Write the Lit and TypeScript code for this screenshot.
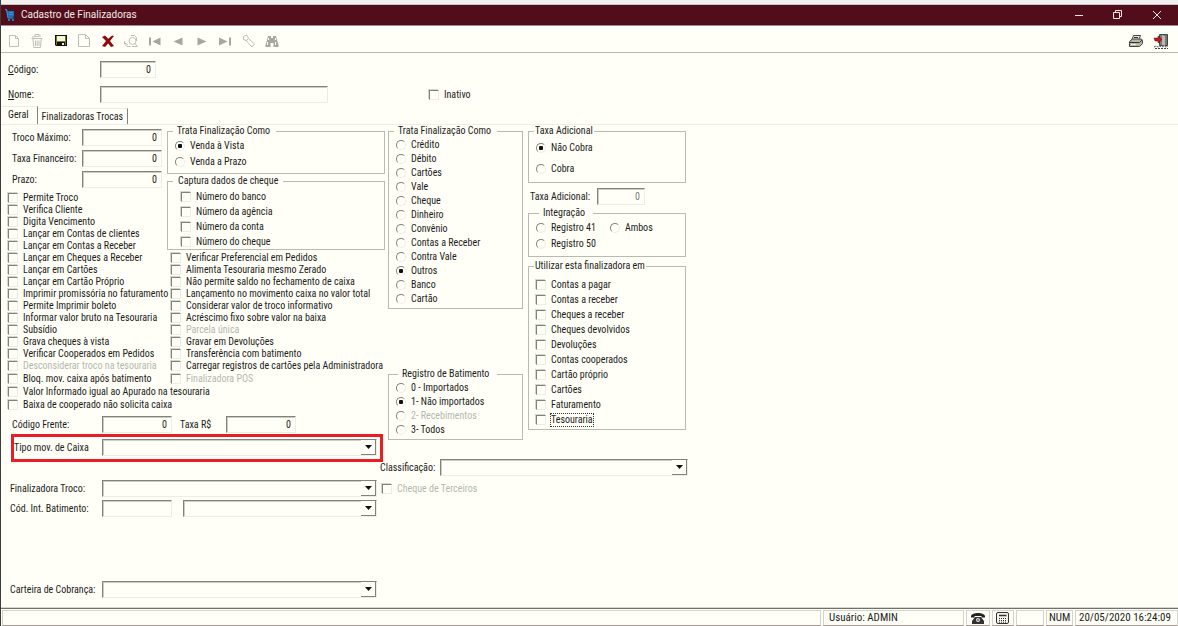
import { LitElement, html, css, svg, nothing } from "lit";
import { customElement } from "lit/decorators.js";
import { classMap } from "lit/directives/class-map.js";

type Option = { text: string; off?: boolean; on?: boolean; focus?: boolean };

const opts = (...texts: string[]): Option[] => texts.map((text) => ({ text }));

const FLAGS_A: Option[] = [
  ...opts(
    "Permite Troco", "Verifica Cliente", "Digita Vencimento", "Lançar em Contas de clientes",
    "Lançar em Contas a Receber", "Lançar em Cheques a Receber", "Lançar em Cartões",
    "Lançar em Cartão Próprio", "Imprimir promissória no faturamento", "Permite Imprimir boleto",
    "Informar valor bruto na Tesouraria", "Subsídio", "Grava cheques à vista",
    "Verificar Cooperados em Pedidos"
  ),
  { text: "Desconsiderar troco na tesouraria", off: true },
];
const FLAGS_A_END = opts(
  "Bloq. mov. caixa após batimento",
  "Valor Informado igual ao Apurado na tesouraria",
  "Baixa de cooperado não solicita caixa"
);
const FLAGS_B: Option[] = [
  ...opts(
    "Verificar Preferencial em Pedidos", "Alimenta Tesouraria mesmo Zerado",
    "Não permite saldo no fechamento de caixa", "Lançamento no movimento caixa no valor total",
    "Considerar valor de troco informativo", "Acréscimo fixo sobre valor na baixa"
  ),
  { text: "Parcela única", off: true },
  ...opts("Gravar em Devoluções", "Transferência com batimento", "Carregar registros de cartões pela Administradora"),
];
const FLAGS_B_END: Option[] = [{ text: "Finalizadora POS", off: true }];
const CHEQUE = opts("Número do banco", "Número da agência", "Número da conta", "Número do cheque");
const TIPO: Option[] = [
  ...opts("Crédito", "Débito", "Cartões", "Vale", "Cheque", "Dinheiro", "Convênio", "Contas a Receber", "Contra Vale"),
  { text: "Outros", on: true },
  ...opts("Banco", "Cartão"),
];
const BATIMENTO: Option[] = [
  { text: "0 - Importados" },
  { text: "1- Não importados", on: true },
  { text: "2- Recebimentos", off: true },
  { text: "3- Todos" },
];
const UTILIZAR: Option[] = [
  ...opts(
    "Contas a pagar", "Contas a receber", "Cheques a receber", "Cheques devolvidos", "Devoluções",
    "Contas cooperados", "Cartão próprio", "Cartões", "Faturamento"
  ),
  { text: "Tesouraria", focus: true },
];

const GREY = "#a4a8a0";
const PALE = "#bdc0b8";
const TOOLS = [
  { name: "Novo", art: svg`<path d="M3.500 2.500h6l3 3v8h-9zM9.500 2.500v3h3" fill="none" stroke=${PALE}/>` },
  { name: "Excluir", art: svg`<path d="M2.500 5.500h11M3 4l9-1M6 3V1.500h4V3M4 6l.8 8.500h6.600L12.200 6M6.500 7.500v5.500M8.200 7.500v5.500M10 7.500v5.500" fill="none" stroke=${PALE}/>` },
  { name: "Salvar", art: svg`<path d="M2 2h12v11H3l-1-1z" fill="#111"/><path d="M4 3h8v5H4z" fill="#f4f4e8"/><path d="M3 3h1v5h8V3h1v9h-1V9H4v3H3z" fill="#77780e"/><path d="M5 10h6v3H5z" fill="#111"/><path d="M9 10h2v2H9z" fill="#eee"/>` },
  { name: "Copiar", art: svg`<path d="M2.500 1.500h7l4 4v8h-11zM9.500 1.500v4h4" fill="none" stroke=${PALE}/>` },
  { name: "Cancelar", art: svg`<path d="M2 4l3-1.500 3.300 3.300L12 2.500l2 .5-4 5 4 5-3 1-2.800-3.500L5 14l-3-1 4-5z" fill="#8b0d0d"/>` },
  { name: "Pesquisar", art: svg`<circle cx="9.500" cy="8" r="3.500" fill="none" stroke=${PALE}/><path d="M12 10.500l2.500 3H9M8 2.500h3.500l2 2V8M1.500 8v3L4 13.500h3.500M2 10l3 2" fill="none" stroke=${PALE}/>` },
  { name: "Primeiro", art: svg`<path d="M2 4.500h2v8H2zM13.500 4.500v8l-8-4z" fill=${GREY}/>` },
  { name: "Anterior", art: svg`<path d="M12.500 4.500v8l-9-4z" fill=${GREY}/>` },
  { name: "Próximo", art: svg`<path d="M3.500 4.500v8l9-4z" fill=${GREY}/>` },
  { name: "Último", art: svg`<path d="M12 4.500h2v8h-2zM2 4.500v8l8.500-4z" fill=${GREY}/>` },
  { name: "Limpar", art: svg`<path d="M2.500 3.500l3-1.500 2 3.500 6 5.500-2.500 3-6-6.500-2.500-1zM5 8l2.500-2.500" fill="none" stroke=${PALE}/>` },
  { name: "Localizar", art: svg`<path d="M4 3h3v2h2V3h3l1 4 1.500 5v2h-5v-4h-3v4h-5v-2L3 7z" fill=${GREY}/><path d="M4.500 5v2M11.500 5v2M3.500 9v3M11.500 9v3" stroke="#fffff8"/>` },
];

@customElement("app-root")
export class AppRoot extends LitElement {
  static styles = css`
    :host {
      --paper: #fffff8;
      --dark: #7f847b;
      --line: #b7bcb2;
      --faint: #eceee5;
      display: flex;
      flex-direction: column;
      box-sizing: border-box;
      min-height: 100vh;
      background: var(--paper);
      border-left: 1px solid #3c3c3c;
      color: #1c1d1a;
      font: 10px/12px "Roboto Condensed", Roboto, "Liberation Sans", sans-serif;
      white-space: nowrap;
    }
    * { box-sizing: border-box; }
    button, input, select { font: inherit; color: inherit; margin: 0; padding: 0; border-radius: 0; }
    button { border: 0; background: none; display: grid; place-items: center; }
    .edge { height: 5px; background: #f0f0f0; border-bottom: 1px solid #c6c6c6; }
    .title { display: flex; align-items: center; height: 21px; padding-right: 2px; background: #520d1b; color: #f3e9ea; border-bottom: 1px solid #a58a90; }
    .title svg { margin: 0 6px 0 3px; }
    h1 { flex: 1; margin: 0; font: 10px/20px Roboto, "Noto Sans", sans-serif; }
    .title button { width: 39px; height: 20px; }
    .title button svg { margin: 0; }
    .tools { display: flex; justify-content: space-between; height: 27px; align-items: center; border-bottom: 1px solid var(--line); padding: 3px 5px 0 1px; }
    .group { display: grid; grid-template-columns: repeat(12, 1fr); width: 282px; }
    .pair { display: flex; }
    .pair button { width: 25px; }
    .head { display: grid; gap: 8px; padding: 8px 7px 3px; }
    .row { display: flex; align-items: center; }
    .row > .cap, .row label { display: flex; align-items: center; }
    .cap { flex: none; }
    .head .cap { width: 92px; }
    .box {
      height: 17px; min-width: 0; padding: 0 4px 1px 2px; text-align: right; outline: 0;
      background: transparent; border: 1px solid var(--faint);
      border-top-color: var(--dark); border-left-color: var(--dark);
      box-shadow: inset 1px 1px 0 #c9cdc4;
    }
    .box:disabled { color: #7c7f78; }
    .w48 { width: 48px; } .w56 { width: 56px; } .w70 { width: 70px; } .w80 { width: 80px; } .w228 { width: 228px; }
    .text { text-align: left; }
    .inativo { margin-left: 101px; }
    .pick { display: grid; flex: 1; height: 17px; }
    .pick > * { grid-area: 1 / 1; }
    .pick select { appearance: none; width: 100%; }
    .pick i {
      justify-self: end; align-self: center; width: 15px; height: 15px; margin-right: 1px; display: grid; place-items: center;
      pointer-events: none; background: var(--paper);
      border-right: 1px solid var(--dark); border-bottom: 1px solid var(--dark);
    }
    .tabs { display: flex; align-items: flex-end; border-bottom: 1px solid var(--faint); padding-left: 1px; height: 19px; }
    .tabs button { height: 16px; padding: 0 4px; border-top: 1px solid var(--faint); border-right: 1px solid var(--dark); }
    .tabs .active { height: 18px; padding: 0 8px 2px 6px; }
    .page { flex: 1; display: flex; align-items: stretch; padding-bottom: 10px; gap: 3px; }
    .left { display: flex; flex-direction: column; width: 384px; }
    .flags { display: grid; grid-template-columns: 159px 218px; padding-left: 7px; align-items: start; }
    .fields { display: grid; gap: 4px; padding: 4px 0 4px 4px; }
    .fields .cap { width: 70px; }
    .opt { display: flex; align-items: center; gap: 5px; }
    .opt.off { color: #b4b7af; }
    .h12 .opt { height: 12px; } .h13 .opt { height: 13px; } .h14 .opt { height: 14px; }
    .h15 .opt { height: 15px; } .h16 .opt { height: 16px; } .h21 .opt { height: 21px; }
    .opt input { appearance: none; flex: none; width: 10px; height: 10px; border: 1px solid var(--faint); border-top-color: var(--dark); border-left-color: var(--dark); }
    .opt input[type="checkbox"] { box-shadow: -1px -1px 0 #d3d6cd; }
    .opt input[type="radio"] { border-radius: 50%; }
    .opt input[type="radio"]:checked { background: radial-gradient(circle, #111 2px, transparent 2.500px); }
    .focus { outline: 1px dotted #333; }
    .second { padding-left: 4px; padding-top: 2px; }
    fieldset { min-width: 0; margin: 0; padding: 1px 7px 3px; border: 1px solid var(--line); }
    legend { padding: 0 6px 0 4px; margin-left: -2px; }
    .wide { padding-right: 8px; }
    .snug legend { padding: 0 1px; }
    .cheque { margin-top: 1px; padding: 2px 13px 0; }
    .cheque legend { margin-left: -8px; padding: 0 5px; }
    .codes { padding: 5px 0 1px 11px; }
    .codes .cap { width: 90px; }
    .codes .next { width: 46px; margin-left: 8px; }
    .mark { width: 372px; margin-left: 10px; padding: 2px 3px 3px 0; border: 3px solid #ec1c24; }
    .mark .cap { width: 88px; }
    .low { display: grid; gap: 3px; padding: 18px 8px 0 9px; }
    .low .cap, .last .cap { width: 92px; }
    .last { margin-top: auto; padding: 0 8px 0 9px; }
    .split { gap: 11px; }
    .first { display: flex; align-items: center; }
    .right { width: 300px; }
    .cols { display: grid; grid-template-columns: 135px 158px; gap: 5px; align-items: start; }
    .forma { padding-bottom: 2px; }
    .bat { margin-top: 59px; padding-bottom: 2px; }
    .bat legend { margin-left: 2px; }
    .cobra { padding-top: 0; }
    .adic { padding: 5px 0 0 2px; }
    .adic .cap { width: 67px; }
    .integ { margin-top: 2px; padding-bottom: 4px; }
    .integ legend { margin-left: 3px; }
    .inline { display: flex; gap: 14px; }
    .util { margin-top: 3px; padding: 5px 7px 2px; }
    .class { margin: 19px 0 0 -8px; }
    .class .cap { width: 60px; }
    .terc { margin: 7px 0 0 -6px; }
    .status { display: grid; grid-template-columns: 1fr 141px 24px 22px 28px 27px 103px; gap: 2px; height: 18px; padding: 1px 0 0 1px; border-top: 1px solid #6f706b; box-shadow: 0 -1px 0 #d5d7ce; font-size: 11px; }
    .status > * { display: flex; align-items: center; border: 1px solid #d3d5cc; border-bottom-color: #a89a98; padding-left: 5px; }
    .status .icon { padding: 0; justify-content: center; }
    .status .num { padding-left: 2px; }
    .status .when { padding-left: 3px; }
  `;

  private check(o: Option, cls = "") {
    return html`<label class=${classMap({ opt: true, off: !!o.off, [cls || "opt"]: true })}>
      <input type="checkbox" ?disabled=${o.off} /><span class=${o.focus ? "focus" : nothing}>${o.text}</span></label>`;
  }
  private radio(name: string, o: Option) {
    return html`<label class=${classMap({ opt: true, off: !!o.off })}>
      <input type="radio" name=${name} ?checked=${o.on} ?disabled=${o.off} /><span>${o.text}</span></label>`;
  }
  private field(id: string, label: unknown, size: string, value = "0", off = false) {
    return html`<label class="cap" for=${id}>${label}</label>
      <input id=${id} class="box ${size}" .value=${value} ?disabled=${off} />`;
  }
  private pick(id: string, name: string) {
    return html`<span class="pick"><select id=${id} class="box" aria-label=${name}><option></option></select>
      <i><svg width="7" height="4"><path d="M0 0h7L3.500 4z" fill="#111" /></svg></i></span>`;
  }

  render() {
    return html`
      <div class="edge"></div>
      <header class="title">
        <svg width="11" height="12" viewBox="0 0 11 12"><path d="M1 .5h2l.5 1.500H10v5L9 8.500H3.500L2.500 2z" fill="#1c6fae" /><path d="M1 .5h1.500L4 9h5.500M5 3.500h4M5 5.500h4" stroke="#2e9be0" fill="none" /><path d="M4 10h2v2H4zM8 10h2v2H8z" fill="#1c7fc4" /></svg>
        <h1>Cadastro de Finalizadoras</h1>
        <button aria-label="Minimizar"><svg width="10" height="10"><path d="M1 5.500h8" stroke="#e9dcde" /></svg></button>
        <button aria-label="Restaurar"><svg width="10" height="10"><path d="M.5 2.500h6v6h-6zM2.500 2.500v-2h6v6h-2" fill="none" stroke="#f3e9ea" /></svg></button>
        <button aria-label="Fechar"><svg width="10" height="10"><path d="M1 1l8 8M9 1L1 9" stroke="#f3e9ea" /></svg></button>
      </header>
      <nav class="tools">
        <div class="group">
          ${TOOLS.map((t) => html`<button aria-label=${t.name}><svg width="16" height="16" viewBox="0 0 16 16">${t.art}</svg></button>`)}
        </div>
        <div class="pair">
          <button aria-label="Imprimir"><svg width="16" height="14" viewBox="0 0 16 14"><path d="M5.500 1.500h7l-2 5h-7z" fill="#e9ebe2" stroke="#444" /><path d="M1.500 7.500l3-2.500h9l1 1.500v3l-3 3h-10z" fill="#b4b7ae" stroke="#444" /><path d="M2 8.500h9.500L14 6M6 3.500h4" stroke="#333" fill="none" /><path d="M3 10h6v1H3z" fill="#f0f0e0" /><path d="M8 10h2v1H8z" fill="#c8c81e" /></svg></button>
          <button aria-label="Sair"><svg width="16" height="16" viewBox="0 0 16 16"><path d="M6.500 1.500h8v11h-8z" fill="#777b75" stroke="#444" /><path d="M9 2l3 1v10l-3-1z" fill="#b6bab3" /><path d="M1 14l2-1 2 1 2-1 2 1 2-1 2 1 2-1M2 15.500h13" stroke="#444" stroke-dasharray="2 1" fill="none" /><path d="M1 5h4V3l4 3.500L5 10V8H2z" fill="#c4141c" stroke="#5c0a0e" stroke-width=".5" /></svg></button>
        </div>
      </nav>

      <section class="head">
        <div class="row">${this.field("codigo", html`<u>C</u>ódigo:`, "w56")}</div>
        <div class="row">
          ${this.field("nome", html`<u>N</u>ome:`, "w228 text", "")}
          ${this.check({ text: "Inativo" }, "inativo")}
        </div>
      </section>
      <nav class="tabs"><button class="active">Geral</button><button>Finalizadoras Trocas</button></nav>

      <main class="page">
        <section class="left">
          <div class="flags">
            <div>
              <div class="fields">
                <div class="row">${this.field("troco", "Troco Máximo:", "w80")}</div>
                <div class="row">${this.field("financeiro", "Taxa Financeiro:", "w80")}</div>
                <div class="row">${this.field("prazo", "Prazo:", "w80")}</div>
              </div>
              <div class="h12">${FLAGS_A.map((o) => this.check(o))}</div>
              <div class="h13">${FLAGS_A_END.map((o) => this.check(o))}</div>
            </div>
            <div>
              <fieldset class="h16">
                <legend>Trata Finalização Como</legend>
                ${this.radio("venda", { text: "Venda à Vista", on: true })}
                ${this.radio("venda", { text: "Venda a Prazo" })}
              </fieldset>
              <fieldset class="cheque h15">
                <legend>Captura dados de cheque</legend>
                ${CHEQUE.map((o) => this.check(o))}
              </fieldset>
              <div class="second">
                <div class="h12">${FLAGS_B.map((o) => this.check(o))}</div>
                <div class="h13">${FLAGS_B_END.map((o) => this.check(o))}</div>
              </div>
            </div>
          </div>
          <div class="row codes">
            ${this.field("frente", "Código Frente:", "w70")}
            <label class="next" for="taxa">Taxa R$</label><input id="taxa" class="box w70" value="0" />
          </div>
          <div class="row mark"><label class="cap" for="tipo">Tipo mov. de Caixa</label>${this.pick("tipo", "Tipo mov. de Caixa")}</div>
          <div class="low">
            <div class="row"><label class="cap" for="fin">Finalizadora Troco:</label>${this.pick("fin", "Finalizadora Troco")}</div>
            <div class="row split">
              <span class="first">${this.field("cod", "Cód. Int. Batimento:", "w70 text", "")}</span>
              ${this.pick("batimento", "Batimento")}
            </div>
          </div>
          <div class="row last"><label class="cap" for="carteira">Carteira de Cobrança:</label>${this.pick("carteira", "Carteira de Cobrança")}</div>
        </section>

        <section class="right">
          <div class="cols">
            <div>
              <fieldset class="forma h14"><legend>Trata Finalização Como</legend>${TIPO.map((o) => this.radio("forma", o))}</fieldset>
              <fieldset class="bat h14"><legend class="wide">Registro de Batimento</legend>${BATIMENTO.map((o) => this.radio("reg", o))}</fieldset>
            </div>
            <div>
              <fieldset class="cobra snug h21">
                <legend>Taxa Adicional</legend>
                ${this.radio("cobra", { text: "Não Cobra", on: true })}
                ${this.radio("cobra", { text: "Cobra" })}
              </fieldset>
              <div class="row adic">${this.field("adicional", "Taxa Adicional:", "w48", "0", true)}</div>
              <fieldset class="integ h16">
                <legend class="wide">Integração</legend>
                <div class="inline">${this.radio("integ", { text: "Registro 41" })}${this.radio("integ", { text: "Ambos" })}</div>
                ${this.radio("integ", { text: "Registro 50" })}
              </fieldset>
              <fieldset class="util snug h15"><legend>Utilizar esta finalizadora em</legend>${UTILIZAR.map((o) => this.check(o))}</fieldset>
            </div>
          </div>
          <div class="row class"><label class="cap" for="classif">Classificação:</label>${this.pick("classif", "Classificação")}</div>
          <div class="terc h12">${this.check({ text: "Cheque de Terceiros", off: true })}</div>
        </section>
      </main>

      <footer class="status">
        <span></span>
        <span>Usuário: ADMIN</span>
        <span class="icon"><svg width="14" height="12" viewBox="0 0 14 12"><path d="M0 4C1 0 13 0 14 4v1.500h-3.500V4h-7v1.500H0z" fill="#222" /><path d="M4 5h6l3 4v3H1V9z" fill="#333" /><circle cx="7" cy="8" r="2" fill="#ddd" /><circle cx="7" cy="8" r=".8" fill="#222" /></svg></span>
        <span class="icon"><svg width="14" height="12" viewBox="0 0 14 12"><rect x=".5" y=".5" width="12" height="11" rx="1.500" fill="#f4f4ec" stroke="#333" /><path d="M3 3.500h7.500" stroke="#333" stroke-width="1.500" /><path d="M3 6.500h8M3 8.500h8M3 10.200h8" stroke="#333" stroke-dasharray="1 1" /></svg></span>
        <span></span>
        <span class="num">NUM</span>
        <span class="when">20/05/2020 16:24:09</span>
      </footer>
    `;
  }
}
